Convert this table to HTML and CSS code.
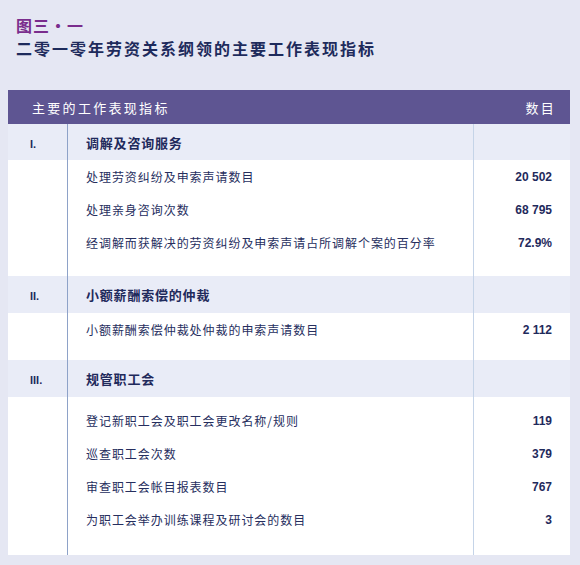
FILE: index.html
```html
<!DOCTYPE html>
<html lang="zh-CN">
<head>
<meta charset="utf-8">
<link rel="stylesheet" href="styles.css">
</head>
<body>
<div class="page">
  <div class="titles">
    <div class="fig">图三·一</div>
    <h1 class="title">二零一零年劳资关系纲领的主要工作表现指标</h1>
  </div>
  <table class="tbl">
    <colgroup><col class="c1"><col class="c2"><col class="c3"></colgroup>
    <thead>
      <tr class="head">
        <th colspan="2" class="h-left">主要的工作表现指标</th>
        <th class="h-right">数目</th>
      </tr>
    </thead>
    <tbody>
      <tr class="sec sec-a"><td class="num">I.</td><td class="mid">调解及咨询服务</td><td class="val"></td></tr>
      <tr class="item"><td></td><td class="mid">处理劳资纠纷及申索声请数目</td><td class="val">20 502</td></tr>
      <tr class="item"><td></td><td class="mid">处理亲身咨询次数</td><td class="val">68 795</td></tr>
      <tr class="item"><td></td><td class="mid">经调解而获解决的劳资纠纷及申索声请占所调解个案的百分率</td><td class="val">72.9%</td></tr>
      <tr class="sp sp-17"><td></td><td class="mid"></td><td class="val"></td></tr>

      <tr class="sec"><td class="num">II.</td><td class="mid">小额薪酬索偿的仲裁</td><td class="val"></td></tr>
      <tr class="item"><td></td><td class="mid">小额薪酬索偿仲裁处仲裁的申索声请数目</td><td class="val">2 112</td></tr>
      <tr class="sp sp-14"><td></td><td class="mid"></td><td class="val"></td></tr>

      <tr class="sec"><td class="num">III.</td><td class="mid">规管职工会</td><td class="val"></td></tr>
      <tr class="sp sp-7"><td></td><td class="mid"></td><td class="val"></td></tr>
      <tr class="item"><td></td><td class="mid">登记新职工会及职工会更改名称/规则</td><td class="val">119</td></tr>
      <tr class="item"><td></td><td class="mid">巡查职工会次数</td><td class="val">379</td></tr>
      <tr class="item"><td></td><td class="mid">审查职工会帐目报表数目</td><td class="val">767</td></tr>
      <tr class="item"><td></td><td class="mid">为职工会举办训练课程及研讨会的数目</td><td class="val">3</td></tr>
      <tr class="sp sp-19"><td></td><td class="mid"></td><td class="val"></td></tr>
    </tbody>
  </table>
</div>
</body>
</html>
```

FILE: styles.css
```css
* { box-sizing: border-box; }
html, body {
  margin: 0;
  padding: 0;
  background: #e5e7f3;
}
body {
  font-family: "Noto Sans CJK SC", "Liberation Sans", sans-serif;
  color: #232b5b;
}
.page {
  width: 580px;
  height: 565px;
  padding: 15px 10px 0 8px;
}
.titles {
  padding-left: 8px;
  height: 75px;
}
.fig {
  font-size: 16px;
  line-height: 20px;
  height: 23px;
  color: #7a2d8d;
  font-weight: bold;
  letter-spacing: 1px;
}
.title {
  margin: 0;
  font-size: 16px;
  line-height: 20px;
  font-weight: bold;
  letter-spacing: 2px;
  color: #1e2b5c;
}
.tbl {
  width: 562px;
  table-layout: fixed;
  border-collapse: separate;
  border-spacing: 0;
  background: #ffffff;
}
.c1 { width: 59px; }
.c2 { width: 406px; }
.c3 { width: 97px; }
.head th {
  background: #5e5592;
  color: #ffffff;
  font-weight: normal;
  font-size: 13px;
  letter-spacing: 2.3px;
  height: 34px;
  padding: 0;
}
.h-left { text-align: left; padding-left: 24px !important; }
.h-right { text-align: right; padding-right: 14px !important; }
td {
  padding: 0;
  vertical-align: middle;
}
.mid {
  border-left: 1px solid #8ea2c8;
  padding-left: 18px;
  white-space: nowrap;
}
.val {
  border-left: 1px solid #c5d4e8;
  text-align: right;
  padding-right: 18px;
  font-family: "Liberation Sans", Arial, sans-serif;
  font-weight: bold;
  font-size: 12px;
  color: #1f2a5c;
}
.sec td {
  background: #e9ecf7;
  height: 37px;
}
.sec-a td { height: 36px; }
.sec .mid {
  font-size: 13px;
  font-weight: bold;
  letter-spacing: 0.8px;
  color: #1f2a5c;
}
.sec .num {
  padding-left: 22px;
  padding-top: 3px;
  font-family: "Liberation Sans", Arial, sans-serif;
  font-weight: bold;
  font-size: 11px;
  color: #1f2a5c;
}
.item td { height: 33px; }
.item .mid {
  font-size: 12px;
  letter-spacing: 0.95px;
  color: #262e5e;
}
.sp-17 td { height: 17px; }
.sp-14 td { height: 14px; }
.sp-7 td { height: 7px; }
.sp-19 td { height: 19px; }
```
